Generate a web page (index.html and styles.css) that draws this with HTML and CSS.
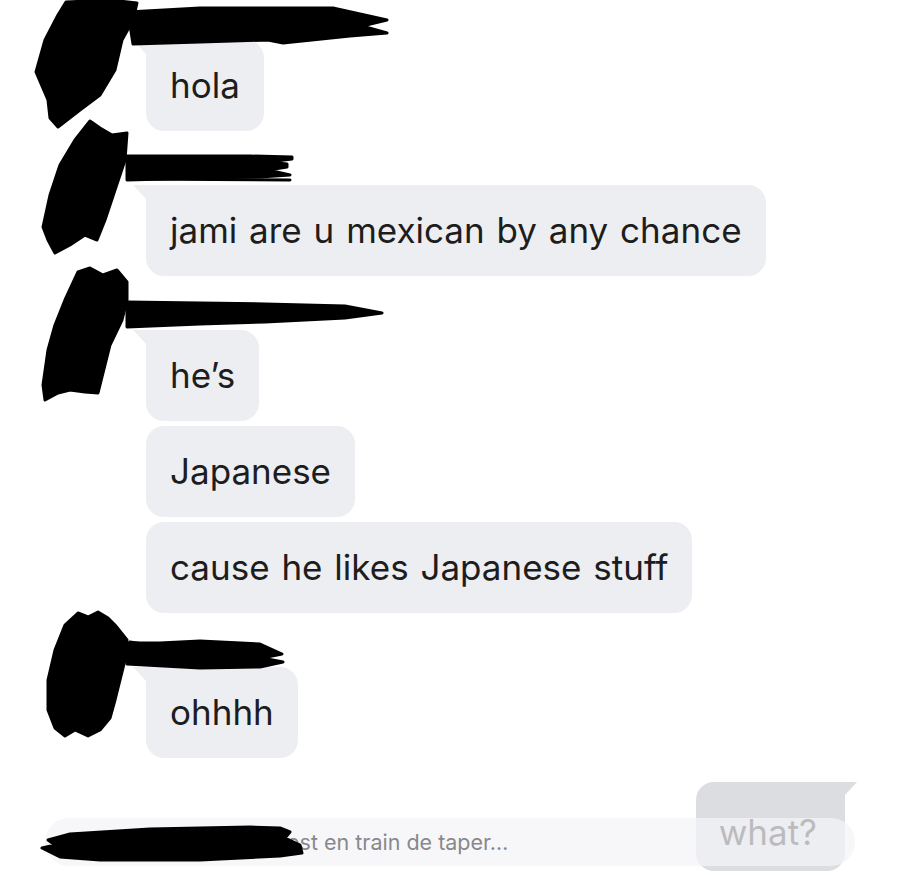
FILE: index.html
```html
<!DOCTYPE html>
<html lang="en">
<head>
<meta charset="utf-8">
<title>Chat</title>
<link rel="stylesheet" href="styles.css">
</head>
<body>
<div class="screen">
  <div class="thread">
    <div class="group">
      <div class="bubble first">hola</div>
    </div>
    <div class="group">
      <div class="bubble first">jami are u mexican by any chance</div>
    </div>
    <div class="group">
      <div class="bubble first">he’s</div>
      <div class="bubble">Japanese</div>
      <div class="bubble">cause he likes Japanese stuff</div>
    </div>
    <div class="group">
      <div class="bubble first">ohhhh</div>
    </div>
    <div class="outgoing">
      <div class="bubble out">what?</div>
    </div>
  </div>

  <div class="typing">est en train de taper…</div>

  <svg class="scribbles" width="900" height="875" viewBox="0 0 900 875" aria-hidden="true">
    <g fill="#000" stroke="#000" stroke-width="3" stroke-linejoin="round">
      <!-- scribble 1 -->
      <path d="M66 2 L110 0 L137 3 L133 20 L122 40 L115 70 L100 95 L80 110 L58 127 L50 118 L48 100 L36 72 L45 40 L58 15 Z"/>
      <path d="M128 12 L200 8 L333 8 L387 20 L362 26 L387 33 L350 36 L283 43 L268 40 L200 42 L133 44 Z"/>
      <!-- scribble 2 -->
      <path d="M90 121 L100 128 L112 135 L127 133 L125 160 L115 190 L105 220 L97 240 L85 235 L70 245 L55 253 L48 240 L43 227 L50 195 L60 165 L75 140 Z"/>
      <path d="M127 156 L250 156 L292 157 L292 159 L268 162 L287 164 L287 167 L268 170 L290 175 L260 177 L200 178 L127 180 Z"/>
      <!-- scribble 3 -->
      <path d="M78 272 L90 268 L103 275 L117 270 L127 282 L127 300 L122 320 L110 345 L98 393 L85 392 L70 390 L58 393 L45 400 L43 385 L48 350 L55 325 L65 300 Z"/>
      <path d="M127 302 L200 303 L265 304 L345 306 L382 313 L345 318 L265 322 L200 324 L127 327 Z"/>
      <!-- scribble 4 -->
      <path d="M78 613 L88 617 L98 612 L108 618 L115 625 L127 640 L125 660 L115 700 L110 718 L100 730 L88 736 L75 730 L65 736 L55 728 L48 710 L48 680 L55 650 L65 625 Z"/>
      <path d="M127 643 L160 643 L200 641 L260 644 L282 654 L262 658 L283 662 L260 667 L200 668 L127 664 Z"/>
      <!-- scribble 5 -->
      <path d="M48 840 L70 834 L150 829 L200 828 L250 827 L280 828 L290 832 L285 838 L300 845 L302 853 L280 856 L200 860 L100 860 L60 857 L42 848 L55 845 Z"/>
    </g>
    <g fill="none" stroke="#000" stroke-width="3" stroke-linecap="round">
      <path d="M128 179 L290 180"/>
      <path d="M130 642 L150 645"/>
    </g>
  </svg>
</div>
</body>
</html>
```
FILE: styles.css
```css
html, body {
  margin: 0;
  padding: 0;
  background: #ffffff;
}

.screen {
  position: relative;
  width: 900px;
  height: 875px;
  overflow: hidden;
  font-family: Inter, "Noto Sans", "DejaVu Sans", sans-serif;
  color: #1d1d20;
}

.thread {
  display: flex;
  flex-direction: column;
  padding: 40px 55px 0 146px;
}

.group {
  display: flex;
  flex-direction: column;
  align-items: flex-start;
  gap: 5px;
}

.group + .group {
  margin-top: 54px;
}

.bubble {
  position: relative;
  background: #edeef1;
  border-radius: 18px;
  padding: 24px 24px;
  font-size: 35px;
  line-height: 43px;
  word-spacing: 2px;
  white-space: nowrap;
}

.bubble.first {
  border-top-left-radius: 0;
}

.bubble.first::before {
  content: "";
  position: absolute;
  left: -13px;
  top: 0;
  width: 13px;
  height: 14px;
  background: #edeef1;
  clip-path: polygon(0 0, 100% 0, 100% 100%);
}

.outgoing {
  display: flex;
  justify-content: flex-end;
  margin-top: 24px;
}

.bubble.out {
  background: #dcdde0;
  color: #2a2a2d;
  border-top-right-radius: 0;
  padding: 29px 28px 17px 23px;
}

.bubble.out::after {
  content: "";
  position: absolute;
  right: -12px;
  top: 0;
  width: 12px;
  height: 13px;
  background: #dcdde0;
  clip-path: polygon(0 0, 100% 0, 0 100%);
}

.typing {
  position: absolute;
  left: 45px;
  top: 818px;
  width: 810px;
  height: 48px;
  box-sizing: border-box;
  padding-left: 242px;
  border-radius: 24px;
  background: rgba(244, 244, 246, 0.72);
  font-size: 21.5px;
  line-height: 48px;
  color: #88888d;
}

.scribbles {
  position: absolute;
  left: 0;
  top: 0;
  pointer-events: none;
}
```
